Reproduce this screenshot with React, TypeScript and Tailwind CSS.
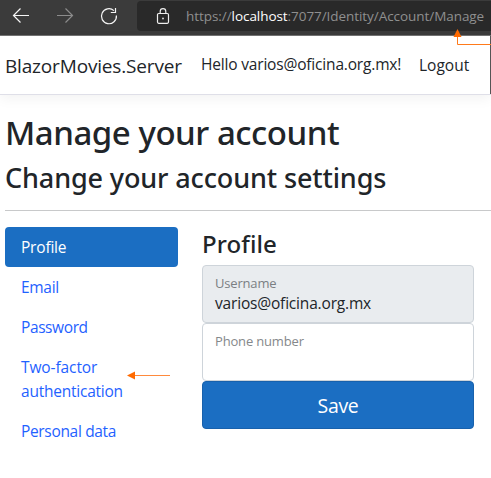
import React from "react";

function BrowserBar() {
  return (
    <div className="flex h-9 items-start border-b border-[#737373] bg-[#3b3b3b]">
      <svg className="h-[35px] w-[137px] shrink-0" viewBox="0 0 137 35" fill="none" strokeWidth="1.2">
        <path d="M29 15.5H13.5M20.5 8.5L13.5 15.5L20.5 22.5" stroke="#f5f5f5" />
        <path d="M57 15.5H72.5M65.5 8.5L72.5 15.5L65.5 22.5" stroke="#8c8c8c" />
        <path d="M113.9 10.6A7.5 7.5 0 1 0 116.4 15.5M115.5 8V12.5H110.8" stroke="#f5f5f5" />
      </svg>
      <div className="mt-px flex h-[30px] flex-1 items-center rounded-l-[4px] bg-[#292929] pl-[19px]">
        <svg className="h-[17px] w-[14px] shrink-0" viewBox="0 0 14 17" fill="none" stroke="#eeeeee" strokeWidth="1.2">
          <rect x="1.5" y="5.5" width="11" height="9.8" rx="1.2" />
          <path d="M4.2 5.5V3.4A2.8 2.8 0 0 1 9.8 3.4V5.5" />
          <rect x="6.2" y="9.7" width="1.6" height="1.6" fill="#eeeeee" stroke="none" />
        </svg>
        <span className="ml-[16px] whitespace-nowrap text-[13.5px] leading-5 tracking-[-0.06px] text-[#8f8f8f]">
          https://<span className="text-white">localhost</span>:7077/Identity/Account/Manage
        </span>
      </div>
    </div>
  );
}

function Navbar() {
  return (
    <nav className="flex h-[59px] items-center whitespace-nowrap border-b border-[#dfdfe8] pl-[5px] text-[15.5px] shadow-[0_4px_12px_rgba(0,0,0,0.05)]">
      <span className="w-[196px] pt-0.5 text-[19px] leading-[30px]">
        <span className="tracking-[-0.17px]">BlazorMovies.Server</span>
      </span>
      <span className="w-[218px] pb-0.5 leading-6 tracking-[-0.18px]">Hello varios@oficina.org.mx!</span>
      <span className="leading-6">Logout</span>
    </nav>
  );
}

function Sidebar() {
  return (
    <ul className="w-[173px] text-[15.5px] leading-6 text-[#1f62ff]">
      <li className="rounded-[4px] bg-[#1b6ec2] px-4 py-2 tracking-[-0.2px] text-white">Profile</li>
      <li className="px-4 py-2 tracking-[-0.3px]">Email</li>
      <li className="px-4 py-2 tracking-[-0.4px]">Password</li>
      <li className="relative px-4 py-2 tracking-[-0.23px]">
        <span className="tracking-[-0.1px]">Two-factor</span>
        <br />
        authentication
        <svg className="absolute left-[121px] top-[22px] h-[13px] w-[45px]" viewBox="0 0 45 13">
          <path d="M8 6.5H44" stroke="#ff8a3d" />
          <path d="M1 6.5L9 2.5V10.5Z" fill="#ff6a00" />
        </svg>
      </li>
      <li className="px-4 py-2 tracking-[-0.33px]">Personal data</li>
    </ul>
  );
}

function ProfileForm() {
  return (
    <section className="w-[272px]">
      <h3 className="mb-1 h-[34px] font-['Noto_Sans'] text-[24px] font-medium leading-[34px] tracking-[0.1px]">Profile</h3>
      <div className="h-[58px] rounded-[4px] border border-[#ced4da] bg-[#e9ecef] px-3 pt-[7px]">
        <div className="text-[13px] leading-[20px] tracking-[-0.18px] text-[#7b7f83]">Username</div>
        <div className="text-[15.5px] leading-[20px] tracking-[-0.18px]">varios@oficina.org.mx</div>
      </div>
      <div className="h-[58px] rounded-[4px] border border-[#ced4da] bg-white px-3 pt-[7px]">
        <div className="text-[13px] leading-[20px] tracking-[-0.17px] text-[#85888b]">Phone number</div>
      </div>
      <button className="block h-12 w-full rounded-[4px] border border-[#1861ac] bg-[#1b6ec2] pt-0.5 text-[19.5px] leading-[30px] tracking-[-0.3px] text-white">
        Save
      </button>
    </section>
  );
}

export default function App() {
  return (
    <div className="relative h-[478px] w-[491px] overflow-hidden bg-white font-['Open_Sans',sans-serif] text-[#212529]">
      <BrowserBar />
      <Navbar />
      <main className="pl-[5px]">
        <h1 className="mt-[15px] font-['Noto_Sans'] text-[33px] font-medium leading-[46px] tracking-[-0.47px]">
          Manage your account
        </h1>
        <h2 className="mt-[5px] font-['Noto_Sans'] text-[27px] font-medium leading-[34px] tracking-[-0.13px]">
          Change your account settings
        </h2>
        <hr className="mt-[15px] border-[#c8c9ca]" />
        <div className="mt-4 flex gap-6">
          <Sidebar />
          <ProfileForm />
        </div>
      </main>
      <div className="absolute right-0 top-9 h-[58px] w-px bg-[#555555]" />
      <svg className="absolute right-0 top-7 h-5 w-10" viewBox="0 0 40 20" fill="none">
        <path d="M6.5 8V16.5H40" stroke="#ff7a1a" />
        <path d="M6.5 1L10.5 9H2.5Z" fill="#ff6a00" />
      </svg>
    </div>
  );
}
